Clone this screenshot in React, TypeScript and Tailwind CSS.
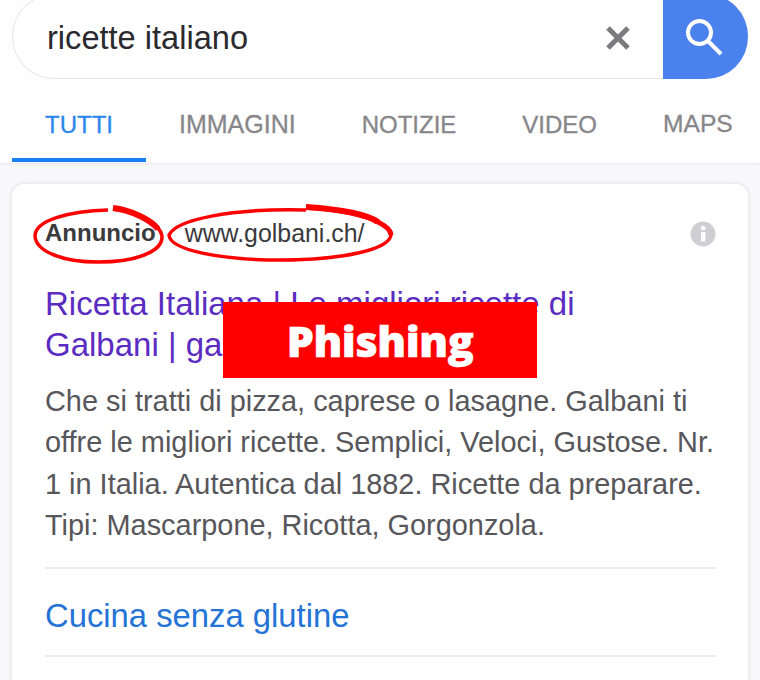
export default function App() {
  const sans = "font-['Liberation_Sans',Arial,sans-serif]";
  return (
    <div className={`relative w-[760px] h-[680px] overflow-hidden bg-[#f8f7f9] ${sans}`}>
      <div className="flex h-[163px] flex-col bg-[#fefefe] px-3 shadow-[0_1px_3px_rgba(60,50,70,0.08)]">
        <div className="-mt-[6px] flex h-[85px] items-stretch">
          <div className="flex flex-1 items-center rounded-l-[42px] border border-r-0 border-[#e6e5e8] bg-white pl-[34px]">
            <span className="flex-1 pt-[4px] text-[32.6px] leading-none text-[#2a2a2e]">ricette italiano</span>
            <svg width="26" height="26" viewBox="0 0 26 26" className="mr-[32px] mt-[2px]">
              <path d="M3 3 L23 23 M23 3 L3 23" stroke="#7b7a7e" strokeWidth="5" />
            </svg>
          </div>
          <div className="flex w-[85px] items-center justify-center rounded-r-[42px] bg-[#4a81ec] pr-[3px] pt-[1px]">
            <svg width="38" height="38" viewBox="0 0 38 38" fill="none" stroke="#fff" strokeWidth="4">
              <circle cx="14.5" cy="14.5" r="11.5" />
              <path d="M23 23 L36 36" strokeWidth="4" />
            </svg>
          </div>
        </div>
        <div className="flex h-[83px] items-stretch text-[24px] text-[#87868a] [-webkit-text-stroke:0.3px]">
          <div className="flex w-[134px] items-center justify-center border-b-[4px] border-[#1a82f0] pt-[12px] text-[#2a86ee]">TUTTI</div>
          <div className="flex items-center pl-[33px] pt-[8px] text-[25px]">IMMAGINI</div>
          <div className="flex items-center pl-[66px] pt-[8px]">NOTIZIE</div>
          <div className="flex items-center pl-[66px] pt-[8px]">VIDEO</div>
          <div className="flex items-center pl-[66px] pt-[8px] text-[24.6px]">MAPS</div>
        </div>
      </div>

      <div className="mx-3 mt-[21px] h-[600px] rounded-[12px] bg-white pl-[33px] pr-[32px] shadow-[0_0_4px_rgba(70,50,90,0.16)]">
        <div className="flex h-[101px] items-center justify-between pb-[2px]">
          <div className="flex items-center text-[#3a3a3d]">
            <span className="text-[24px] font-bold">Annuncio</span>
            <span className="ml-[29px] text-[24.9px]">www.golbani.ch/</span>
          </div>
          <svg width="26" height="26" viewBox="0 0 26 26">
            <circle cx="13" cy="13" r="12.5" fill="#cfced3" />
            <rect x="11" y="11" width="4.4" height="9.5" fill="#fff" />
            <circle cx="13.2" cy="7.2" r="2.4" fill="#fff" />
          </svg>
        </div>
        <div className="-mt-[2px] text-[33px] leading-[41px] text-[#5a2cc2]">
          Ricetta Italiana | Le migliori ricette di
          <br />
          Galbani | galbani.ch
        </div>
        <div className="mt-[16px] text-[28.9px] leading-[41.3px] text-[#57565a]">
          Che si tratti di pizza, caprese o lasagne. Galbani ti
          <br />
          offre le migliori ricette. Semplici, Veloci, Gustose. Nr.
          <br />
          1 in Italia. Autentica dal 1882. Ricette da preparare.
          <br />
          Tipi: Mascarpone, Ricotta, Gorgonzola.
        </div>
        <div className="mt-[21px] h-[2px] bg-[#ecebee]" />
        <div className="flex h-[86px] items-center pt-[7px] text-[32.8px] text-[#2473d6]">Cucina senza glutine</div>
        <div className="h-[2px] bg-[#ecebee]" />
      </div>

      <svg className="pointer-events-none absolute left-0 top-0" width="760" height="680" fill="none">
        <path d="M113 209 C 140 212 160 224 162 236 C 163 252 135 262 98 262 C 64 262 36 252 35 236 C 35 220 70 211 108 210" stroke="#ff0000" strokeWidth="3.5" />
        <path d="M113 208 C 130 210 150 219 158 229" stroke="#ff0000" strokeWidth="6" />
        <path d="M306 208 C 340 209 390 220 391 234 C 391 250 340 260 280 260 C 220 260 170 250 169 235 C 176 220 230 208 306 210" stroke="#ff0000" strokeWidth="3.5" />
        <path d="M306 207 C 335 209 365 213 378 222" stroke="#ff0000" strokeWidth="6" />
        <path d="M378 222 C 386 226 391 230 391 235" stroke="#ff0000" strokeWidth="5" />
      </svg>

      <div className="absolute left-[223px] top-[302px] flex h-[76px] w-[314px] items-center justify-center bg-[#ff0000]">
        <span className="font-['Open_Sans',sans-serif] text-[43px] font-extrabold leading-none tracking-[-0.4px] text-white [-webkit-text-stroke:0.6px_white]">Phishing</span>
      </div>
    </div>
  );
}
